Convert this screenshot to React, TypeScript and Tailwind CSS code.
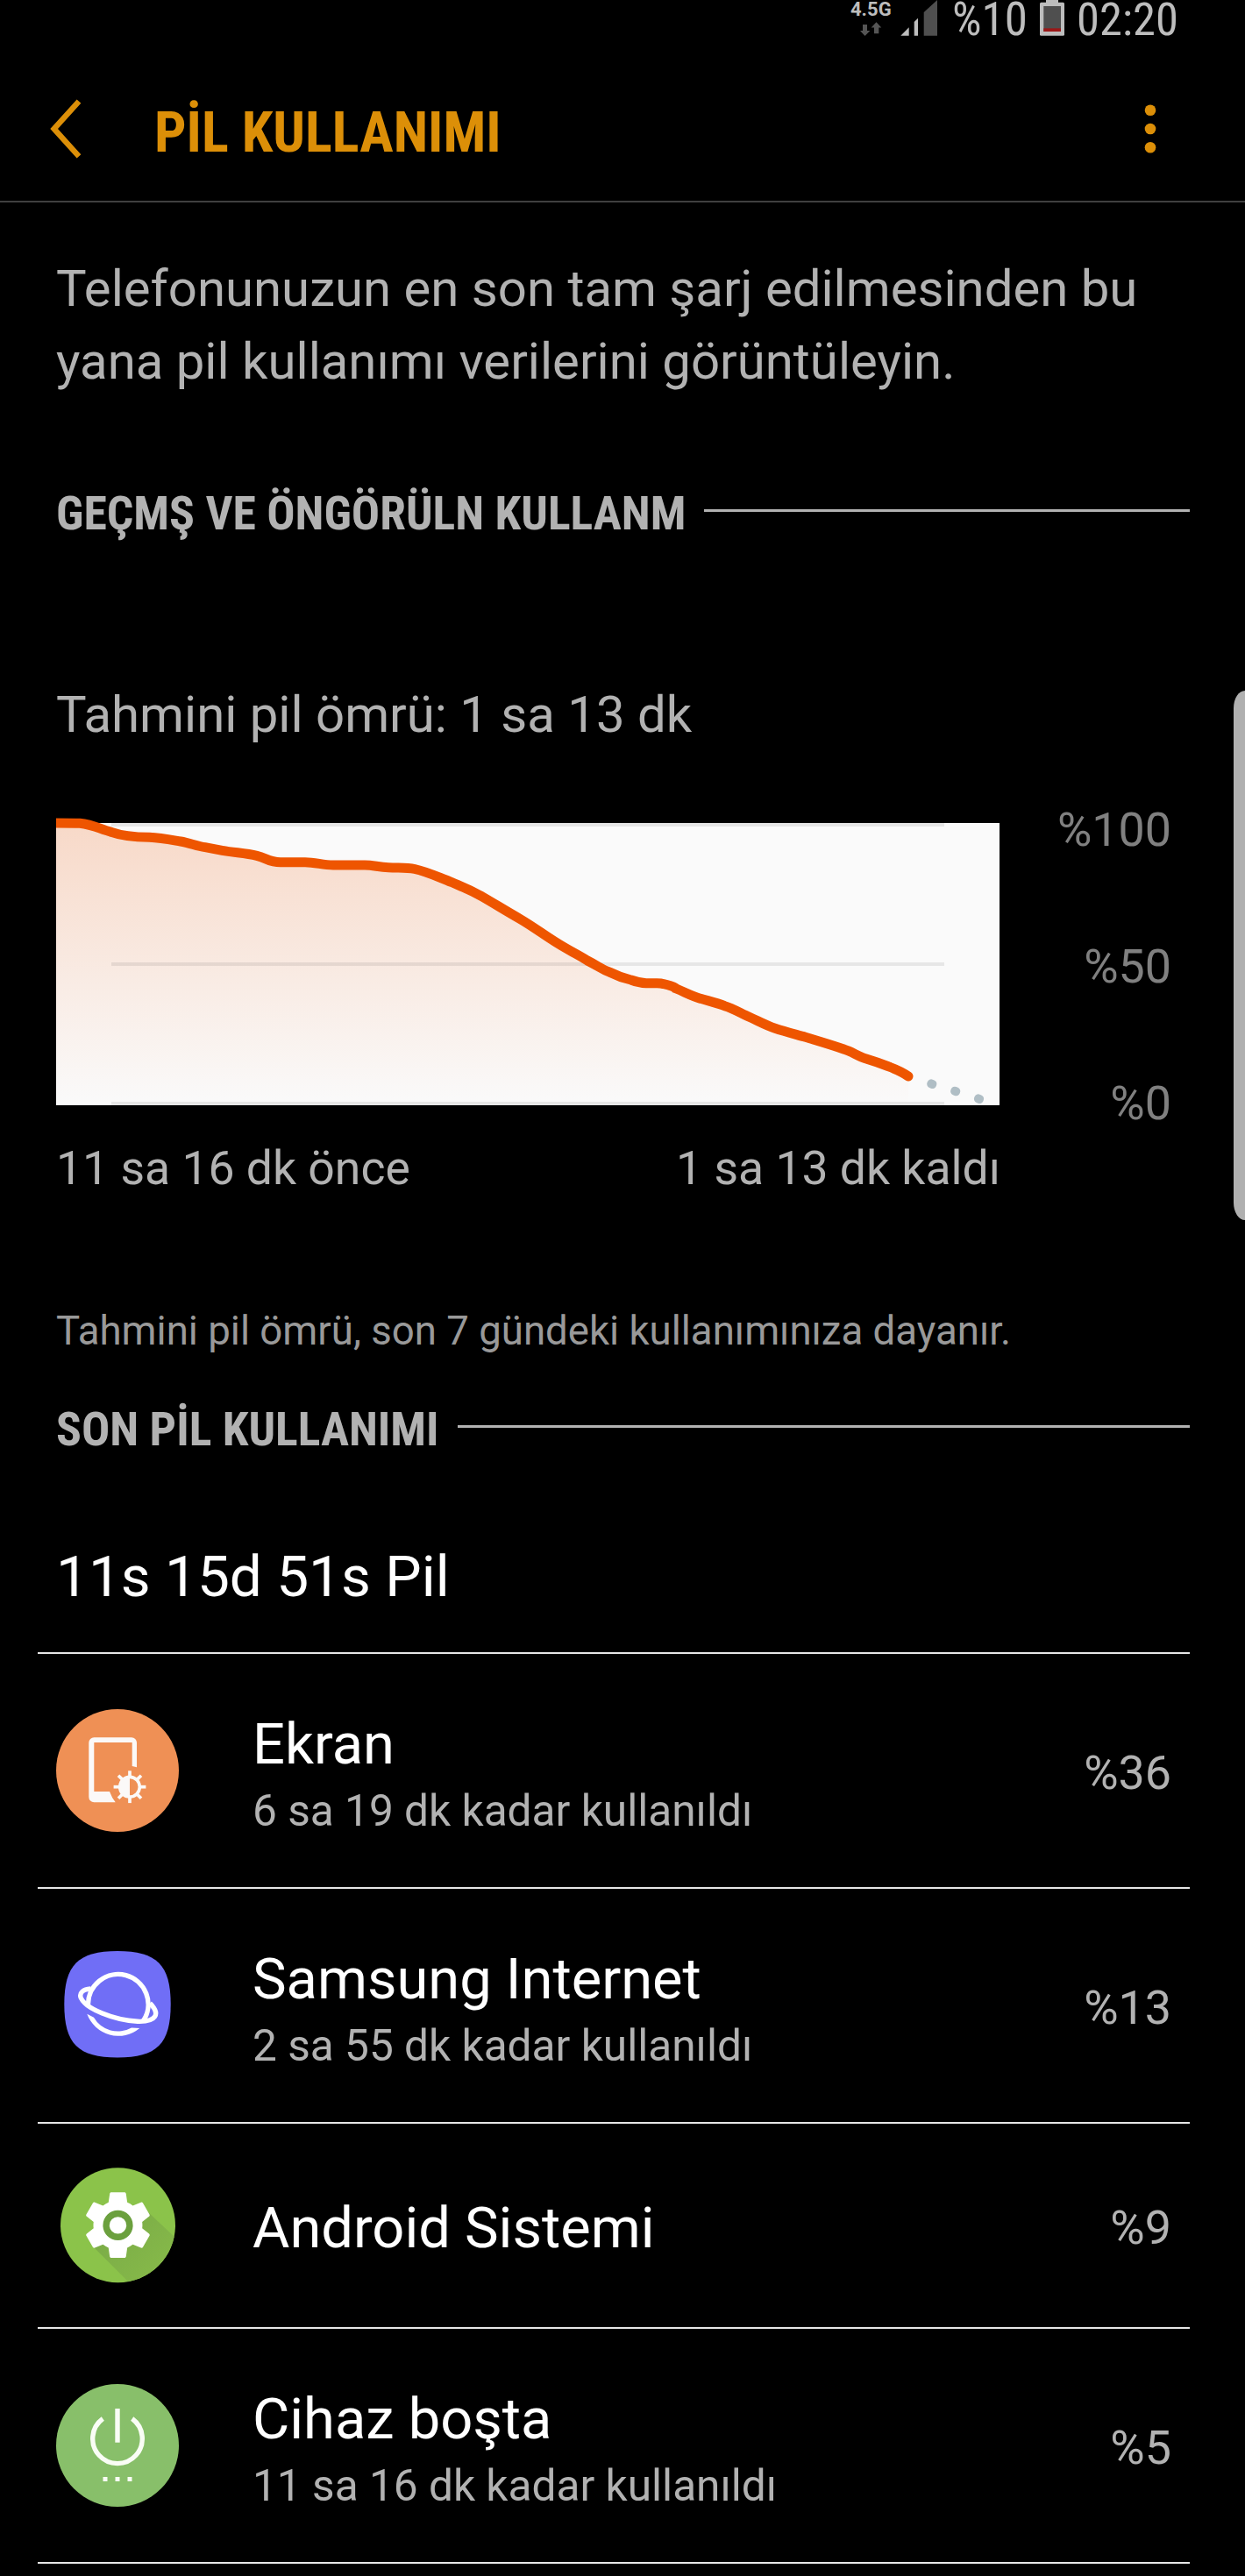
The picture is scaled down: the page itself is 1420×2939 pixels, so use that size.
import type { ReactNode } from "react";

function StatusBar() {
  return (
    <div className="flex h-11 items-start pl-[970px] text-[#bdbdbd]">
      <div className="flex w-[57px] flex-col">
        <span className="h-[25px] text-[22px] leading-[21px] font-bold">4.5G</span>
        <svg className="ml-[10px]" width="26" height="17" viewBox="0 0 26 17" fill="#555">
          <path d="M4 3h5v7h3.4L6.5 16 1 10h3z" />
          <path d="M17 13.3V6.5h-3.4L19.5.3 25.3 6.5h-3v6.8z" />
        </svg>
      </div>
      <svg width="42" height="41" viewBox="0 0 42 41">
        <path d="M.3 40.7 9.7 31.3v9.4z" fill="#bdbdbd" />
        <path d="M15.7 40.7V25l4.3-4.3v20z" fill="#bdbdbd" />
        <path d="M26.7 40.7V14L42 0v40.7z" fill="#4f4f4f" />
      </svg>
      <span className="ml-[17px] w-[100px] font-['Roboto_Condensed'] text-[53px] leading-[44px]">%10</span>
      <svg width="28" height="41" viewBox="0 0 28 41">
        <rect x="7" width="14" height="6" fill="#bdbdbd" />
        <rect y="2.7" width="28" height="38" rx="1.5" fill="#bdbdbd" />
        <rect x="4.3" y="7" width="19.7" height="29" fill="#4f4f4f" />
        <rect x="4.3" y="32.3" width="19.7" height="3.7" fill="#9b1717" />
      </svg>
      <span className="ml-[14px] font-['Roboto_Condensed'] text-[52.5px] leading-[44px]">02:20</span>
    </div>
  );
}

function Header() {
  return (
    <header className="flex h-[187px] items-center border-b-2 border-[#3f3f3f] pt-[21px] pl-[57px] text-[#dc8f08]">
      <svg width="36" height="68" viewBox="0 0 36 68" fill="none" stroke="#dc8f08" strokeWidth="6.4">
        <path d="M33 2.6 4.6 34 33 65.4" />
      </svg>
      <h1 className="mt-2 ml-[83px] font-['Roboto_Condensed'] text-[64.4px] leading-[76px] font-bold">PİL KULLANIMI</h1>
      <svg className="mr-[101px] ml-auto" width="14" height="56" viewBox="0 0 14 56" fill="#dc8f08">
        <circle cx="7" cy="6.7" r="6.3" />
        <circle cx="7" cy="28" r="6.3" />
        <circle cx="7" cy="49.3" r="6.3" />
      </svg>
    </header>
  );
}

function SectionTitle({ children }: { children: ReactNode }) {
  return (
    <div className="flex items-start pr-[63px]">
      <h2 className="font-['Roboto_Condensed'] text-[53.7px] leading-[60px] font-bold whitespace-nowrap">{children}</h2>
      <div className="mt-[25px] ml-[21px] h-[3px] grow bg-[#b2b2b2]" />
    </div>
  );
}

const curve =
  "M0 0C12 0 20 0 27 .3C43 2 50 7 63 10.3C76 15 88 16 106.500 16.300C120 17 130 19 142 21C153 23 160 26 170 27.700L189.500 31.300C205 34 216 34 229 37.300C240 40 243 44.700 256 44.700L284 44.700C296 44.700 304 48 316 48L352 48C362 48 368 50.500 379 50.700C392 51.300 400 50.500 409 52.500C421 55 427 58 450.500 67.300C465 73.500 470 75 486 84C500 92 514 101 529.600 109.700C548 120.500 562 132 580 142C592 149 600 153 606 157C620 164 622 167 631 170C640 174.500 647 177 655.600 179C664 182 668 182.500 673 182.700C685 183.300 688 182 693 183.700C703 185.500 708 189 708 189.300C718 193.500 726 198 735 200.300C744 203 753 205 762.500 208.700C772 211.500 781 217 790 221C801 226 810 231 820 234.300C831 238 843 241 854.600 244.300C870 249 884 253 899 258.300C908 261 914 266 924 269C934 272 941 274.500 949 277.700C958 281 965 284 972 289";

function BatteryChart() {
  return (
    <svg className="block overflow-visible" width="1076" height="322" viewBox="0 0 1076 322">
      <defs>
        <linearGradient id="usage" x1="0" y1="0" x2="0" y2="322" gradientUnits="userSpaceOnUse">
          <stop offset="0" stopColor="#ee5500" stopOpacity=".2" />
          <stop offset="1" stopColor="#ee5500" stopOpacity="0" />
        </linearGradient>
        <clipPath id="plot">
          <rect x="0" y="-10" width="1076" height="332" />
        </clipPath>
      </defs>
      <rect width="1076" height="322" fill="#fafafa" />
      <path d={curve + "V322H0Z"} fill="url(#usage)" />
      <g fill="#000" fillOpacity=".08">
        <rect x="63" y="0" width="950" height="4" />
        <rect x="63" y="159" width="950" height="4" />
        <rect x="63" y="318" width="950" height="4" />
      </g>
      <g fill="#b0bec5">
        <rect x="993.300" y="292.700" width="11" height="10" rx="4.500" transform="rotate(22 998.800 297.700)" />
        <rect x="1020.200" y="301" width="11" height="10" rx="4.500" transform="rotate(22 1025.700 306)" />
        <rect x="1047" y="309.700" width="11" height="10" rx="4.500" transform="rotate(22 1052.500 314.700)" />
      </g>
      <g clipPath="url(#plot)">
        <path d={curve} fill="none" stroke="#ee5500" strokeWidth="11" strokeLinecap="round" />
      </g>
    </svg>
  );
}

function ScreenIcon() {
  return (
    <svg width="140" height="140" viewBox="0 0 140 140">
      <circle cx="70" cy="70" r="70" fill="#ef9055" />
      <path
        d="M37.300 38.300a6 6 0 0 1 6-6H86a6 6 0 0 1 6 6V66.300L86.700 65V38H43.300V94H61q2.500 7 6.700 12.300H43.300a6 6 0 0 1-6-6z"
        fill="#fbf9f8"
      />
      <g stroke="#fbf9f8" strokeWidth="3.700">
        {[0, 45, 90, 135, 180, 225, 270, 315].map((a) => (
          <path key={a} d="M84 77V70.300" transform={`rotate(${a} 84 88.700)`} />
        ))}
        <circle cx="84" cy="88.700" r="11.300" fill="none" strokeWidth="3.600" />
      </g>
      <path d="M84 77.500v22.400a11.200 11.200 0 0 1 0-22.400z" fill="#fbf9f8" />
    </svg>
  );
}

function InternetIcon() {
  return (
    <svg width="140" height="140" viewBox="0 0 140 140">
      <path
        d="M9.300 68.800C9.300 23.900 25.100 8 70 8S130.700 23.900 130.700 68.800 114.900 129.600 70 129.600 9.300 113.700 9.300 68.800z"
        fill="#706ef6"
      />
      <g fill="none" stroke="#fff" strokeWidth="5.400">
        <path d="M36.500 70.500A34.300 34.300 0 1 1 99.500 87.500" />
        <path d="M39.500 51C30.500 51.500 26 56 28.300 61.500C34 74 66 87 93 88.300C114 89 119.500 80 107 67.500" />
      </g>
      <path d="M35.300 79.700A38 38 0 0 0 95.300 96L86 95.500A31.700 31.700 0 0 1 43 83.700z" fill="#fff" />
    </svg>
  );
}

function AndroidIcon() {
  return (
    <svg width="140" height="140" viewBox="0 0 140 140">
      <defs>
        <clipPath id="disc">
          <circle cx="70.500" cy="69.700" r="65.500" />
        </clipPath>
        <linearGradient id="shade" x1="60" y1="60" x2="118" y2="118" gradientUnits="userSpaceOnUse">
          <stop offset="0" stopColor="#7aab47" />
          <stop offset="1" stopColor="#85b849" />
        </linearGradient>
      </defs>
      <circle cx="70.500" cy="69.700" r="65.500" fill="#8bc34a" />
      <path d="M42 94 104 54 150 97V150H98z" fill="url(#shade)" clipPath="url(#disc)" />
      <path
        transform="translate(25.700 24.900) scale(3.730)"
        fill="#fff"
        d="M19.430 12.980c.04-.32.07-.64.07-.98s-.03-.66-.07-.98l2.110-1.650c.19-.15.24-.42.12-.64l-2-3.460c-.12-.22-.39-.3-.61-.22l-2.490 1c-.52-.4-1.080-.73-1.690-.98l-.38-2.650C14.460 2.180 14.250 2 14 2h-4c-.25 0-.46.18-.49.42l-.38 2.650c-.61.25-1.170.59-1.690.98l-2.490-1c-.23-.09-.49 0-.61.22l-2 3.460c-.13.22-.07.49.12.64l2.110 1.650c-.04.32-.07.65-.07.98s.03.66.07.98l-2.110 1.650c-.19.15-.24.42-.12.64l2 3.460c.12.22.39.3.61.22l2.490-1c.52.4 1.080.73 1.690.98l.38 2.650c.03.24.24.42.49.42h4c.25 0 .46-.18.49-.42l.38-2.650c.61-.25 1.170-.59 1.690-.98l2.490 1c.23.09.49 0 .61-.22l2-3.460c.12-.22.07-.49-.12-.64l-2.110-1.650z"
      />
      <circle cx="70.500" cy="69.900" r="13.400" fill="#fff" stroke="#6ba03e" strokeWidth="7.400" />
    </svg>
  );
}

function IdleIcon() {
  return (
    <svg width="140" height="140" viewBox="0 0 140 140">
      <circle cx="70" cy="70" r="70" fill="#88bf6a" />
      <g fill="none" stroke="#f9fdf5" strokeWidth="5.400">
        <path d="M53.300 39.500A28.300 28.300 0 1 0 86.700 39.500" />
        <path d="M70 28v38.700" />
      </g>
      <g fill="#f9fdf5">
        <rect x="53.500" y="106" width="5" height="5" />
        <rect x="67.500" y="106" width="5" height="5" />
        <rect x="81.500" y="106" width="5" height="5" />
      </g>
    </svg>
  );
}

type Usage = { name: string; detail?: string; percent: string; icon: ReactNode };

const usages: Usage[] = [
  { name: "Ekran", detail: "6 sa 19 dk kadar kullanıldı", percent: "%36", icon: <ScreenIcon /> },
  { name: "Samsung Internet", detail: "2 sa 55 dk kadar kullanıldı", percent: "%13", icon: <InternetIcon /> },
  { name: "Android Sistemi", percent: "%9", icon: <AndroidIcon /> },
  { name: "Cihaz boşta", detail: "11 sa 16 dk kadar kullanıldı", percent: "%5", icon: <IdleIcon /> },
];

function UsageRow({ name, detail, percent, icon }: Usage) {
  return (
    <li
      className={`flex items-center border-b-2 border-[#e6e6e6] pr-[21px] pl-[21px] ${detail ? "h-[268px]" : "h-[234px]"}`}
    >
      {icon}
      <div className={`ml-[84px] flex flex-col gap-2 ${detail ? "pt-[7px]" : "pt-[5px]"}`}>
        <span className="text-[65px] leading-[76px] text-white">{name}</span>
        {detail && <span className="text-[49.6px] leading-[60px]">{detail}</span>}
      </div>
      <span className="ml-auto pt-1.5 text-[53.8px] leading-[64px]">{percent}</span>
    </li>
  );
}

export default function App() {
  return (
    <div className="relative h-[2939px] w-[1420px] bg-black font-['Roboto',sans-serif] text-[#b2b2b2]">
      <StatusBar />
      <Header />
      <main>
        <section className="pt-[57px] pl-16">
          <p className="text-[58.1px] leading-[83px]">
            Telefonunuzun en son tam şarj edilmesinden bu
            <br />
            yana pil kullanımı verilerini görüntüleyin.
          </p>
          <div className="mt-[102px]">
            <SectionTitle>GEÇMŞ VE ÖNGÖRÜLN KULLANM</SectionTitle>
          </div>
          <p className="mt-[165px] text-[58.1px] leading-[68px]">Tahmini pil ömrü: 1 sa 13 dk</p>
          <div className="mt-[90px] flex h-[322px] justify-between pr-[84px]">
            <BatteryChart />
            <div className="-mt-6 flex h-[376px] flex-col justify-between text-right text-[53.8px] leading-[64px] text-[#808080]">
              <span>%100</span>
              <span>%50</span>
              <span>%0</span>
            </div>
          </div>
          <div className="mt-10 flex w-[1077px] justify-between text-[53.5px] leading-[64px]">
            <span>11 sa 16 dk önce</span>
            <span>1 sa 13 dk kaldı</span>
          </div>
          <p className="mt-[126px] text-[45.6px] leading-[56px] text-[#999]">
            Tahmini pil ömrü, son 7 gündeki kullanımınıza dayanır.
          </p>
        </section>
        <section className="pt-[54px]">
          <div className="pl-16">
            <SectionTitle>SON PİL KULLANIMI</SectionTitle>
            <p className="mt-[98px] text-[65.7px] leading-[80px] text-white">11s 15d 51s Pil</p>
          </div>
          <ul className="mt-[46px] mr-[63px] ml-[43px] border-t-2 border-[#e6e6e6]">
            {usages.map((u) => (
              <UsageRow key={u.name} {...u} />
            ))}
          </ul>
        </section>
      </main>
      <div className="absolute top-[788px] right-0 h-[604px] w-[13px] rounded-l-[13px_20px] bg-[#b0b0b0]" />
    </div>
  );
}
